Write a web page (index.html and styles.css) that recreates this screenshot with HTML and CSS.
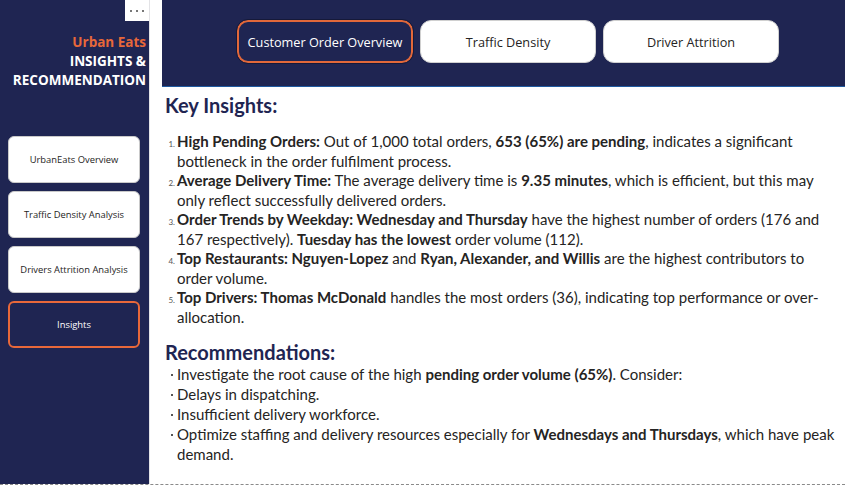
FILE: index.html
```html
<!DOCTYPE html>
<html>
<head>
<meta charset="utf-8">
<link rel="stylesheet" href="styles.css">
</head>
<body>
<div class="page">
  <aside class="sidebar">
    <div class="more-row"><div class="more"><span></span><span></span><span></span></div></div>
    <div class="brand">
      <div class="brand-name">Urban Eats</div>
      <div class="brand-sub">INSIGHTS &amp;</div>
      <div class="brand-sub">RECOMMENDATION</div>
    </div>
    <nav class="nav">
      <div class="nav-btn">UrbanEats Overview</div>
      <div class="nav-btn">Traffic Density Analysis</div>
      <div class="nav-btn">Drivers Attrition Analysis</div>
      <div class="nav-btn active">Insights</div>
    </nav>
  </aside>
  <main class="main">
    <header class="topbar">
      <div class="tab active">Customer Order Overview</div>
      <div class="tab">Traffic Density</div>
      <div class="tab">Driver Attrition</div>
    </header>
    <section class="content">
      <h2 class="title">Key Insights:</h2>
      <ol class="insights">
        <li><b>High Pending Orders:</b> Out of 1,000 total orders, <b>653 (65%) are pending</b>, indicates a significant bottleneck in the order fulfilment process.</li>
        <li><b>Average Delivery Time:</b> The average delivery time is <b>9.35 minutes</b>, which is efficient, but this may only reflect successfully delivered orders.</li>
        <li><b>Order Trends by Weekday: Wednesday and Thursday</b> have the highest number of orders (176 and 167 respectively). <b>Tuesday has the lowest</b> order volume (112).</li>
        <li><b>Top Restaurants: Nguyen-Lopez</b> and <b>Ryan, Alexander, and Willis</b> are the highest contributors to order volume.</li>
        <li><b>Top Drivers: Thomas McDonald</b> handles the most orders (36), indicating top performance or over-allocation.</li>
      </ol>
      <h2 class="title rec-title">Recommendations:</h2>
      <ul class="recs">
        <li>Investigate the root cause of the high <b>pending order volume (65%)</b>. Consider:</li>
        <li>Delays in dispatching.</li>
        <li>Insufficient delivery workforce.</li>
        <li>Optimize staffing and delivery resources especially for <b>Wednesdays and Thursdays</b>, which have peak demand.</li>
      </ul>
    </section>
  </main>
</div>
<div class="dash"></div>
</body>
</html>
```

FILE: styles.css
```css
html, body {
  margin: 0;
  padding: 0;
  background: #ffffff;
  width: 845px;
  height: 485px;
  overflow: hidden;
}
.page {
  display: flex;
  height: 484px;
}
.sidebar {
  width: 149px;
  background: #1f2552;
  border-right: 1px solid #e3e3e6;
  display: flex;
  flex-direction: column;
}
.more-row {
  display: flex;
  justify-content: flex-end;
}
.more {
  width: 24px;
  height: 21px;
  background: #ffffff;
  display: flex;
  align-items: center;
  justify-content: center;
  gap: 4px;
}
.more span {
  width: 2px;
  height: 2px;
  background: #777;
}
.brand {
  text-align: right;
  padding-right: 3px;
  margin-top: 12px;
  font-family: "Open Sans", sans-serif;
  font-weight: 700;
  font-size: 13.5px;
  line-height: 19px;
}
.brand-name { color: #e8683a; }
.brand-sub { color: #ffffff; }
.nav {
  display: flex;
  flex-direction: column;
  gap: 8px;
  padding: 0 9px 0 8px;
  margin-top: 46px;
}
.nav-btn {
  height: 47px;
  background: #ffffff;
  border: 1px solid #c9c9c9;
  border-radius: 6px;
  display: flex;
  align-items: center;
  justify-content: center;
  font-family: "Open Sans", sans-serif;
  font-size: 9.4px;
  color: #252423;
  box-sizing: border-box;
}
.nav-btn.active {
  background: #1f2552;
  border: 2.5px solid #e8683a;
  color: #ffffff;
}
.main {
  flex: 1;
  display: flex;
  flex-direction: column;
}
.topbar {
  margin-left: 12px;
  height: 87px;
  background: #1f2552;
  border-bottom: 1.5px solid #1f5aa0;
  display: flex;
  align-items: flex-start;
  gap: 7px;
  padding: 20px 0 0 75px;
  box-sizing: border-box;
}
.tab {
  width: 176px;
  height: 43px;
  box-sizing: border-box;
  background: #ffffff;
  border: 1px solid #d0d0d0;
  border-radius: 11px;
  display: flex;
  align-items: center;
  justify-content: center;
  font-family: "Open Sans", sans-serif;
  font-size: 12.7px;
  color: #252423;
}
.tab.active {
  background: #1f2552;
  border: 2px solid #e2683a;
  color: #ffffff;
  outline: 1px solid #15193a;
}
.content {
  padding: 5px 8px 0 15px;
  font-family: Lato, sans-serif;
  color: #252423;
  font-size: 15px;
}
.title {
  margin: 0;
  font-size: 20px;
  font-weight: 700;
  color: #1f2552;
  line-height: 26px;
}
.insights {
  margin: 14px 0 0 0;
  padding: 0 0 0 12px;
  line-height: 19.5px;
}
.insights li::marker {
  font-size: 8px;
  color: #555;
}
.rec-title {
  margin-top: 14px;
  line-height: 22px;
}
.recs {
  margin: 1px 0 0 0;
  padding: 0 0 0 12px;
  line-height: 20px;
  list-style: none;
}
.recs li {
  position: relative;
}
.recs li::before {
  content: "";
  position: absolute;
  left: -6px;
  top: 10px;
  width: 2px;
  height: 2px;
  background: #555;
}
b { font-weight: 700; }
.dash {
  height: 0;
  border-top: 1px dashed #8a8a8a;
}
```
